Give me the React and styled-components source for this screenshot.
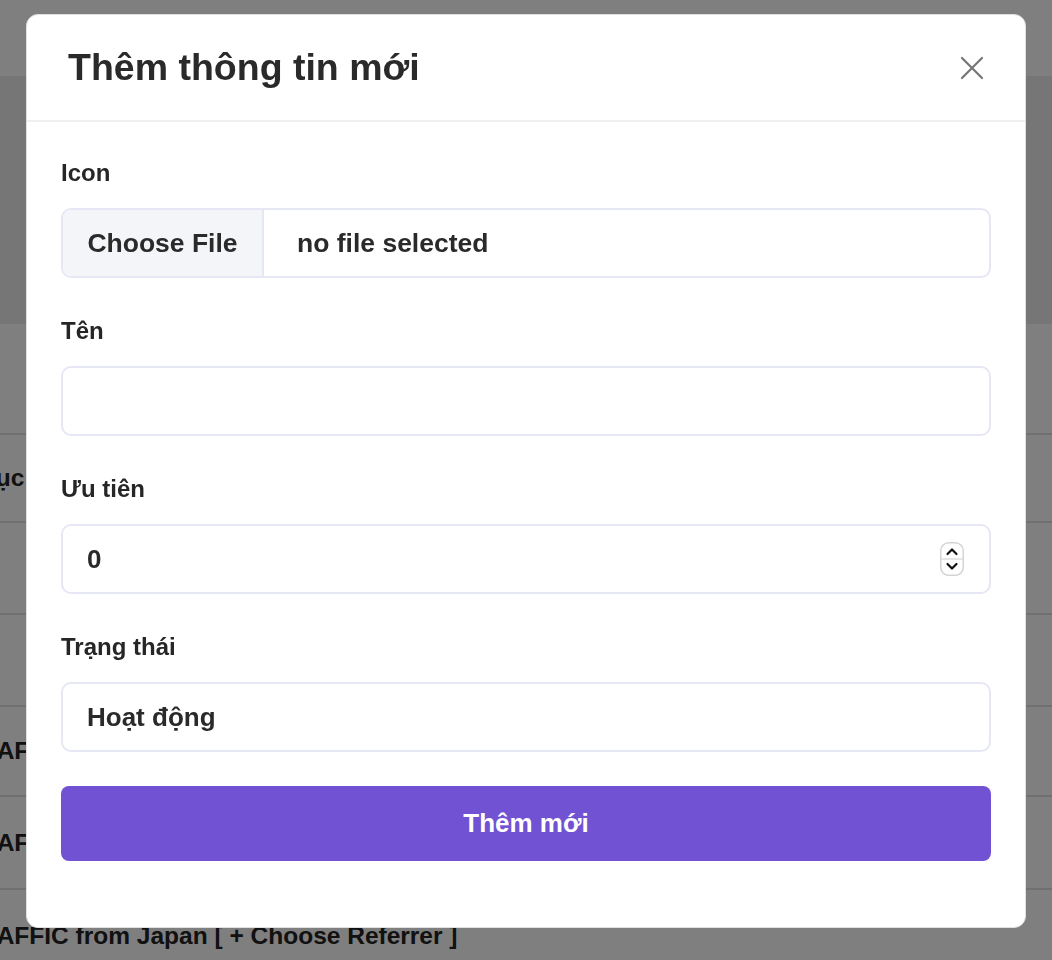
import React from "react";
import styled, { createGlobalStyle } from "styled-components";

const GlobalStyle = createGlobalStyle`
  * { box-sizing: border-box; }
  html, body { margin: 0; padding: 0; }
  body {
    font-family: "Liberation Sans", Arial, sans-serif;
    background: #fff;
    overflow: hidden;
  }
`;

/* page behind the dialog */
const Page = styled.div`
  width: 1052px;
  height: 960px;
  overflow: hidden;
  background: #fff;
`;

const TopBar = styled.div`
  height: 76px;
  background: #fff;
`;

const Hero = styled.div`
  height: 248px;
  background: #ececec;
`;

const Table = styled.div`
  margin-left: -36px;
`;

const Row = styled.div`
  height: ${(p) => p.$h}px;
  border-bottom: 2px solid #e0e0e0;
  display: flex;
  align-items: center;
  font-size: 24.5px;
  font-weight: 700;
  color: #222;
  white-space: nowrap;
`;

const Cell = styled.span`
  margin-left: ${(p) => p.$shift || 0}px;
`;

/* dialog */
const Overlay = styled.div`
  position: fixed;
  inset: 0;
  background: rgba(0, 0, 0, 0.5);
  display: flex;
  justify-content: center;
  align-items: flex-start;
  padding-top: 14px;
`;

const Modal = styled.div`
  width: 1000px;
  background: #fff;
  border: 1px solid #e0e0e0;
  border-radius: 12px;
  overflow: hidden;
`;

const Header = styled.div`
  height: 107px;
  display: flex;
  align-items: center;
  justify-content: space-between;
  padding: 0 40px 0 41px;
  border-bottom: 2px solid #efefef;
`;

const Title = styled.h2`
  margin: 0;
  font-size: 37.5px;
  font-weight: 700;
  color: #2a2a2a;
`;

const CloseButton = styled.button`
  width: 26px;
  height: 26px;
  padding: 0;
  border: none;
  background: transparent;
  display: flex;
  align-items: center;
  justify-content: center;
  cursor: pointer;
`;

const Body = styled.form`
  padding: 36px 34px 66px;
  display: flex;
  flex-direction: column;
  gap: 38px;
`;

const Group = styled.div`
  display: flex;
  flex-direction: column;
`;

const Label = styled.label`
  display: block;
  font-size: 24px;
  line-height: 30px;
  font-weight: 700;
  color: #262626;
  margin-bottom: 20px;
`;

const Box = styled.div`
  height: 70px;
  border: 2px solid #e6e7f4;
  border-radius: 10px;
  display: flex;
  align-items: center;
  overflow: hidden;
  background: #fff;
`;

const FileButton = styled.span`
  height: 100%;
  width: 201px;
  background: #f4f5f8;
  border-right: 2px solid #e6e7f4;
  display: flex;
  align-items: center;
  justify-content: center;
  font-size: 26.5px;
  font-weight: 700;
  color: #2a2a2a;
`;

const FileText = styled.span`
  padding-left: 33px;
  font-size: 26.5px;
  font-weight: 700;
  color: #2a2a2a;
`;

const TextInput = styled.input`
  flex: 1;
  height: 100%;
  border: none;
  outline: none;
  background: transparent;
  padding: 0 0 0 24px;
  font-family: "Liberation Sans", Arial, sans-serif;
  font-size: 26px;
  font-weight: 700;
  color: #2a2a2a;
  -moz-appearance: textfield;
  &::-webkit-inner-spin-button,
  &::-webkit-outer-spin-button {
    -webkit-appearance: none;
    margin: 0;
  }
`;

const Select = styled.select`
  flex: 1;
  height: 100%;
  border: none;
  outline: none;
  background: transparent;
  appearance: none;
  padding: 0 0 0 24px;
  font-family: "Liberation Sans", Arial, sans-serif;
  font-size: 26px;
  font-weight: 700;
  color: #2a2a2a;
`;

const Stepper = styled.span`
  margin-right: 25px;
  display: flex;
`;

const Submit = styled.button`
  margin-top: -4px;
  height: 75px;
  width: 100%;
  border: none;
  border-radius: 8px;
  background: #7152d3;
  color: #fff;
  font-family: "Liberation Sans", Arial, sans-serif;
  font-size: 26px;
  font-weight: 700;
  cursor: pointer;
`;

const CloseIcon = () => (
  <svg width="24" height="24" viewBox="0 0 24 24" fill="none">
    <path d="M2 2L22 22M22 2L2 22" stroke="#757575" strokeWidth="2.2" strokeLinecap="round" />
  </svg>
);

const StepperIcon = () => (
  <svg width="24" height="34" viewBox="0 0 24 34" fill="none">
    <rect x="0.75" y="0.75" width="22.5" height="32.5" rx="8" fill="#fff" stroke="#d4d4d4" strokeWidth="1.5" />
    <line x1="1" y1="17" x2="23" y2="17" stroke="#dedede" strokeWidth="1.5" />
    <path d="M7.5 12L12 7.5L16.5 12" stroke="#111" strokeWidth="2.2" strokeLinecap="round" strokeLinejoin="round" />
    <path d="M7.5 22L12 26.5L16.5 22" stroke="#111" strokeWidth="2.2" strokeLinecap="round" strokeLinejoin="round" />
  </svg>
);

export default function App() {
  return (
    <>
      <GlobalStyle />
      <Page>
        <TopBar />
        <Hero />
        <Table>
          <Row $h={111} />
          <Row $h={88}>
            <Cell $shift={-58}>Danh mục</Cell>
          </Row>
          <Row $h={92} />
          <Row $h={92} />
          <Row $h={90}>
            <Cell>TRAFFIC from Japan</Cell>
          </Row>
          <Row $h={93}>
            <Cell>TRAFFIC from Japan</Cell>
          </Row>
          <Row $h={94}>
            <Cell>TRAFFIC from Japan [ + Choose Referrer ]</Cell>
          </Row>
        </Table>
      </Page>

      <Overlay>
        <Modal>
          <Header>
            <Title>Thêm thông tin mới</Title>
            <CloseButton type="button" aria-label="Đóng">
              <CloseIcon />
            </CloseButton>
          </Header>
          <Body onSubmit={(e) => e.preventDefault()}>
            <Group>
              <Label>Icon</Label>
              <Box>
                <FileButton>Choose File</FileButton>
                <FileText>no file selected</FileText>
              </Box>
            </Group>
            <Group>
              <Label>Tên</Label>
              <Box>
                <TextInput type="text" />
              </Box>
            </Group>
            <Group>
              <Label>Ưu tiên</Label>
              <Box>
                <TextInput type="number" defaultValue={0} />
                <Stepper>
                  <StepperIcon />
                </Stepper>
              </Box>
            </Group>
            <Group>
              <Label>Trạng thái</Label>
              <Box>
                <Select defaultValue="1">
                  <option value="1">Hoạt động</option>
                  <option value="0">Không hoạt động</option>
                </Select>
              </Box>
            </Group>
            <Submit type="submit">Thêm mới</Submit>
          </Body>
        </Modal>
      </Overlay>
    </>
  );
}
